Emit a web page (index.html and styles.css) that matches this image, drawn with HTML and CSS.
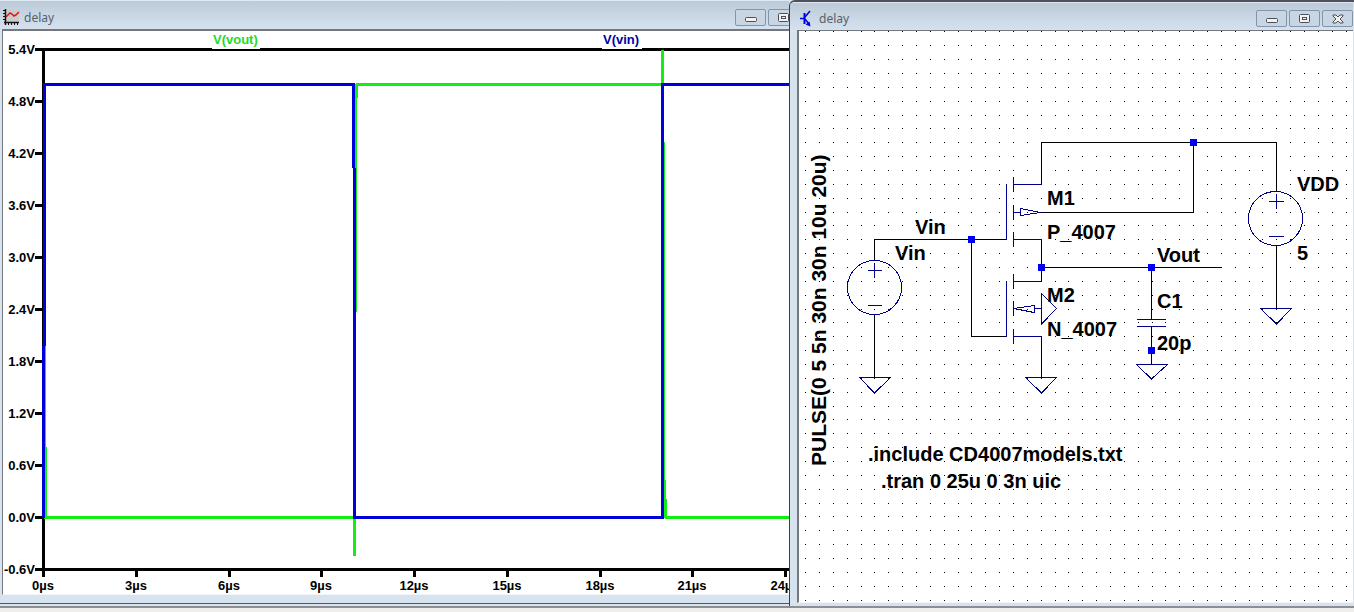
FILE: index.html
```html
<!DOCTYPE html>
<html lang="en">
<head>
<meta charset="utf-8">
<title>delay</title>
<link rel="stylesheet" href="styles.css">
</head>
<body>
<main class="workspace">
  <section class="window window-plot">
    <header class="titlebar">
      <svg class="app-icon" width="17" height="17" viewBox="0 0 17 17" aria-hidden="true">
        <rect x="3" y="1" width="13" height="12" fill="#cdcaca"/>
        <path d="M2.500 0v16M1 13.500h15" stroke="#111" stroke-width="1.500" fill="none"/>
        <path d="M0 1.500h2M0 4.500h2M0 7.500h2M0 10.500h2M5.500 14v2M8.500 14v2M11.500 14v2M14.500 14v2" stroke="#111" fill="none"/>
        <path d="M3 8l2-2 2-2 2 1 2 2 2-1 3-3" stroke="#d8141c" stroke-width="1.500" fill="none"/>
      </svg>
      <h1 class="title">delay</h1>
      <div class="controls">
        <button class="control" type="button" aria-label="Minimize"><svg width="12" height="12" viewBox="0 0 12 12"><rect class="glyph" x="0.500" y="5.500" width="11" height="4" rx="1"/></svg></button>
        <button class="control" type="button" aria-label="Maximize"><svg width="12" height="12" viewBox="0 0 12 12"><rect class="glyph" x="0.500" y="1.500" width="10" height="8" rx="1"/><rect class="glyph" x="3.500" y="4.500" width="4" height="2"/></svg></button>
      </div>
    </header>
    <div class="client">
      <svg class="canvas" role="img" aria-label="Voltage waveforms">
        <g transform="translate(-3 -31)">
          <path class="axis" d="M43.500 48v529M35 49.500H900M35 569.500H900"/>
          <path class="axis" d="M35 101.500h8M35 153.500h8M35 205.500h8M35 257.500h8M35 309.500h8M35 361.500h8M35 413.500h8M35 465.500h8M35 517.500h8"/>
          <path class="axis" d="M136.500 569v8M229.500 569v8M321.500 569v8M414.500 569v8M507.500 569v8M600.500 569v8M692.500 569v8M785.500 569v8"/>
          <rect x="212" y="34" width="48" height="15" fill="#fff"/>
          <rect x="602" y="34" width="40" height="15" fill="#fff"/>
          <path class="trace-out" d="M44.500 250V447M45.500 447V517.500H354.500V556M355.500 312L356 98L357 84.500H662.500V50M663.500 142L664 480L666 517.500H900"/>
          <path class="trace-in" d="M43.500 518V346M44.500 346V84.500H353.500V168M354.500 168V517.500H662.500V84.500H900"/>
          <g class="plot-text">
            <text x="213" y="44" fill="#22dc22">V(vout)</text>
            <text x="603" y="44" fill="#0000a8">V(vin)</text>
            <g text-anchor="end">
              <text x="35" y="54">5.4V</text><text x="35" y="106">4.8V</text><text x="35" y="158">4.2V</text><text x="35" y="210">3.6V</text><text x="35" y="262">3.0V</text><text x="35" y="314">2.4V</text><text x="35" y="366">1.8V</text><text x="35" y="418">1.2V</text><text x="35" y="470">0.6V</text><text x="35" y="522">0.0V</text><text x="35" y="574">-0.6V</text>
            </g>
            <g text-anchor="middle">
              <text x="43" y="590">0µs</text><text x="136" y="590">3µs</text><text x="229" y="590">6µs</text><text x="321" y="590">9µs</text><text x="414" y="590">12µs</text><text x="507" y="590">15µs</text><text x="600" y="590">18µs</text><text x="692" y="590">21µs</text><text x="785" y="590">24µs</text>
            </g>
          </g>
        </g>
      </svg>
    </div>
  </section>

  <section class="window window-schematic">
    <header class="titlebar">
      <svg class="app-icon" width="17" height="17" viewBox="0 0 17 17" aria-hidden="true">
        <path d="M2 8.500h4" stroke="#00d" stroke-width="1.500" fill="none"/>
        <path d="M6.500 3v11" stroke="#00d" stroke-width="2" fill="none"/>
        <path d="M7 7l5-6M7 9l4 5" stroke="#00d" stroke-width="1.500" fill="none"/>
        <path d="M12.500 16.500l-5-2 4-3z" fill="#00d"/>
      </svg>
      <h1 class="title">delay</h1>
      <div class="controls">
        <button class="control" type="button" aria-label="Minimize"><svg width="12" height="12" viewBox="0 0 12 12"><rect class="glyph" x="0.500" y="5.500" width="11" height="4" rx="1"/></svg></button>
        <button class="control" type="button" aria-label="Maximize"><svg width="12" height="12" viewBox="0 0 12 12"><rect class="glyph" x="0.500" y="1.500" width="10" height="8" rx="1"/><rect class="glyph" x="3.500" y="4.500" width="4" height="2"/></svg></button>
        <button class="control" type="button" aria-label="Close"><svg width="12" height="12" viewBox="0 0 12 12"><path class="glyph" d="M1 2h3l2 2 2-2h3v1L8 6l3 3v1H8L6 8l-2 2H1V9l3-3-3-3z"/></svg></button>
      </div>
    </header>
    <div class="client">
      <svg class="canvas" role="img" aria-label="CMOS inverter schematic">
        <defs>
          <pattern id="grid" x="805" y="31" width="97" height="97" patternUnits="userSpaceOnUse">
            <g stroke="#000">
              <path id="dots" d="M0 .5h1m13 0h1m13 0h1m13 0h1m13 0h1m12 0h1m13 0h1"/>
              <use href="#dots" y="14"/><use href="#dots" y="28"/><use href="#dots" y="42"/><use href="#dots" y="56"/><use href="#dots" y="70"/><use href="#dots" y="84"/>
            </g>
          </pattern>
        </defs>
        <g transform="translate(-799 -31)">
          <rect x="799" y="31" width="3000" height="2000" fill="url(#grid)"/>
          <path class="wire" d="M874.500 261V239.500H1006M971.500 239.500V336.500H1006M874.500 315V377M1041.500 184V142.500H1276.500V191M1193.500 142.500V212.500H1041M1041.500 239V281M1041.500 267.500H1221M1151.500 267.500V319M1151.500 326V364M1041.500 336V377M1276.500 246V308"/>
          <g class="part">
            <circle cx="874.500" cy="287.500" r="27"/>
            <circle cx="1275.500" cy="218.500" r="27"/>
            <path d="M868 270.500h14M874.500 263v15M868 305.500h14"/>
            <path d="M1269 201.500h15M1276.500 194v15M1269 236.500h15"/>
            <path d="M1006.500 184V240M1013.500 177v15M1013.500 205v15M1013.500 232v15M1013 184.500h28.500M1013 239.500h28.500M1013 212.500h7M1020.500 208.500v7l20-3z"/>
            <path d="M1006.500 281V337M1013.500 274v15M1013.500 301v15M1013.500 329v15M1013 281.500h28.500M1013 336.500h28.500M1014 308.500l20-3v7zM1034 308.500h7M1041.500 293.500v30.500l15-15.500z"/>
            <path d="M1137 319.500h29M1137 326.500h29"/>
            <path d="M859.500 377.500h31l-16 15.500zM1025.500 377.500h31l-15 15.500zM1136.500 364.500h31l-16 14.500zM1260.500 308.500h31l-15 15.500z"/>
          </g>
          <path class="node" d="M968 236h7v7h-7zM1038 264h7v7h-7zM1148 264h7v7h-7zM1148 347h7v7h-7zM1190 139h7v7h-7z"/>
          <g class="schematic-text">
            <text x="915" y="234">Vin</text>
            <text x="895" y="260">Vin</text>
            <text x="1047" y="205">M1</text>
            <text x="1047" y="239">P_4007</text>
            <text x="1047" y="302">M2</text>
            <text x="1047" y="336">N_4007</text>
            <text x="1157" y="262">Vout</text>
            <text x="1157" y="308">C1</text>
            <text x="1157" y="350">20p</text>
            <text x="1297" y="191">VDD</text>
            <text x="1297" y="260">5</text>
            <text x="868" y="461">.include CD4007models.txt</text>
            <text x="881" y="488">.tran 0 25u 0 3n uic</text>
            <text class="source-value" transform="translate(826 466) rotate(-90)">PULSE(0 5 5n 30n 30n 10u 20u)</text>
          </g>
        </g>
      </svg>
    </div>
  </section>
</main>
<footer class="statusbar"></footer>
</body>
</html>
```
FILE: styles.css
```css
* {
  box-sizing: border-box;
}

body {
  margin: 0;
  min-height: 100vh;
  display: flex;
  flex-direction: column;
  background: #f0eeec;
  font-family: "Noto Sans", sans-serif;
}

.workspace {
  flex: 1;
  display: grid;
  grid-template-columns: minmax(0, 789fr) minmax(0, 565fr);
  background: #d7e4f0;
}

.window {
  display: flex;
  flex-direction: column;
  min-width: 0;
  overflow: hidden;
  background: #d7e4f0;
}

.window-plot {
  padding: 0 0 8px 2px;
  border-bottom: 1px solid #55585c;
  margin-bottom: 2px;
}

.window-schematic {
  padding: 0 1px 3px 7px;
  border-top: 2px solid #50505a;
  border-left: 1px solid #3c3f44;
  border-top-left-radius: 6px;
}

.titlebar {
  flex: none;
  display: flex;
  align-items: center;
  gap: 4px;
  height: 29px;
  padding-top: 5px;
  margin-left: -2px;
  padding-left: 3px;
  border-top: 1px solid #dce9f5;
  background: linear-gradient(#bccad8, #d5e1ee);
}

.window-schematic .titlebar {
  height: 28px;
  margin-left: -7px;
  padding-left: 8px;
  padding-top: 4px;
}

.title {
  flex: 1;
  margin: 0;
  font-size: 12px;
  line-height: 16px;
  font-weight: 400;
  color: #56616e;
}

.controls {
  flex: none;
  display: flex;
  gap: 2px;
}

.window-plot .controls {
  margin-right: -10px;
}

.control {
  display: flex;
  align-items: center;
  justify-content: center;
  width: 31px;
  height: 17px;
  padding: 0;
  border: 1px solid #8295ac;
  border-radius: 2px;
  background: #c8d5e3;
}

.glyph {
  fill: #f2f2f2;
  stroke: #4c4f58;
}

.client {
  flex: 1;
  display: flex;
  min-height: 0;
  border-top: 2px solid #74787c;
  border-left: 1px solid #74787c;
  border-bottom: 1px solid #f2f5f8;
  background: #fff;
}

.canvas {
  flex: 1;
  min-width: 0;
  overflow: hidden;
  shape-rendering: crispEdges;
}

.window-schematic .client {
  border-top-width: 1px;
  border-left-width: 2px;
}

.axis {
  fill: none;
  stroke: #000;
  stroke-width: 3;
}

.trace-out,
.trace-in {
  fill: none;
  stroke-width: 3;
}

.trace-out {
  stroke: #12ee12;
}

.trace-in {
  stroke: #0000d8;
}

.plot-text {
  font: bold 13px "Liberation Sans", Arial, sans-serif;
}

.wire {
  fill: none;
  stroke: #000;
}

.part {
  fill: none;
  stroke: #00008b;
}

.node {
  fill: #0000f0;
}

.schematic-text {
  font: bold 20px "Liberation Sans", Arial, sans-serif;
}

.source-value {
  font-size: 21px;
}

.statusbar {
  flex: none;
  height: 6px;
  border-top: 2px solid #8b8f93;
  background: #f0eeec;
}
```
